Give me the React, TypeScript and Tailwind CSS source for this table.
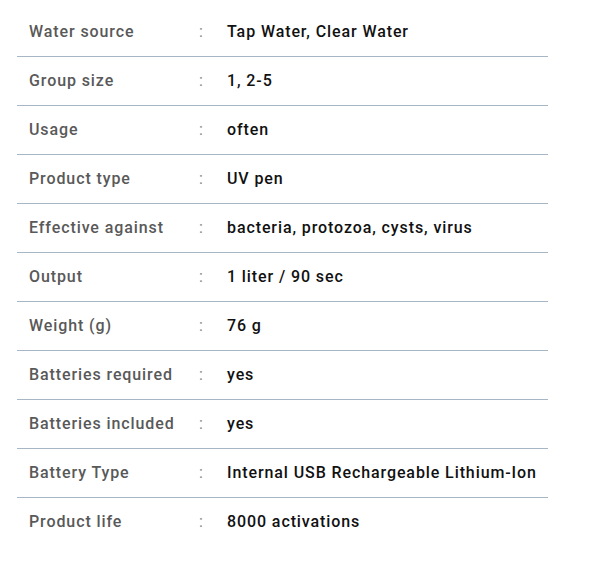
import React from 'react';

const rows: [string, string][] = [
  ['Water source', 'Tap Water, Clear Water'],
  ['Group size', '1, 2-5'],
  ['Usage', 'often'],
  ['Product type', 'UV pen'],
  ['Effective against', 'bacteria, protozoa, cysts, virus'],
  ['Output', '1 liter / 90 sec'],
  ['Weight (g)', '76 g'],
  ['Batteries required', 'yes'],
  ['Batteries included', 'yes'],
  ['Battery Type', 'Internal USB Rechargeable Lithium-Ion'],
  ['Product life', '8000 activations'],
];

export default function App() {
  return (
    <div className="min-h-[581px] bg-white pt-[8px] pl-[17px]" style={{ fontFamily: 'Roboto, "Liberation Sans", sans-serif' }}>
      <div className="w-[531px]">
        {rows.map(([label, value], i) => (
          <div
            key={label}
            className={`flex items-center text-[16px] font-medium tracking-[0.9px] ${i < rows.length - 1 ? 'h-[49px] border-b border-[#a6b6c4]' : 'h-[47px]'}`}
          >
            <div className="w-[182px] pl-3 text-[#595959]">{label}</div>
            <div className="w-[28px] text-[#888888] font-normal">:</div>
            <div className="text-[#111111] whitespace-nowrap">{value}</div>
          </div>
        ))}
      </div>
    </div>
  );
}
